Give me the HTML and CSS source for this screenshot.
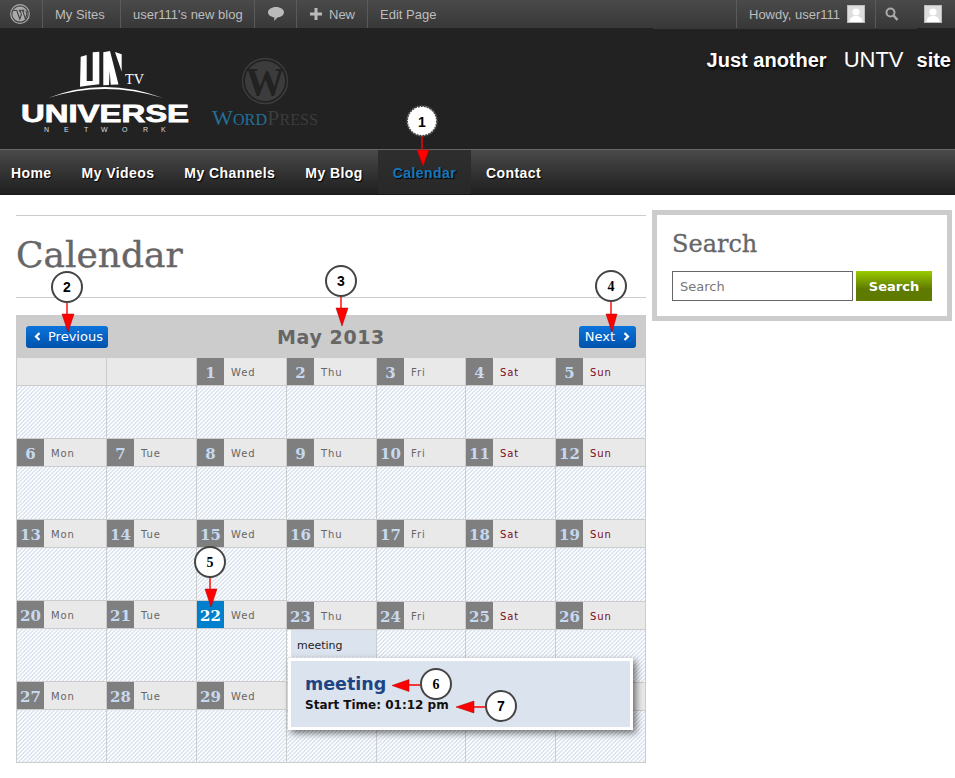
FILE: index.html
```html
<!DOCTYPE html>
<html lang="en">
<head>
<meta charset="utf-8">
<title>Calendar</title>
<link rel="stylesheet" href="styles.css">
</head>
<body>
<div class="adminbar">
  <div class="ab-item ab-logo"><svg width="20" height="20" viewBox="0 0 20 20"><circle cx="10" cy="10" r="9.3" fill="none" stroke="#aaa" stroke-width="1.2"/><circle cx="10" cy="10" r="7.6" fill="#aaa"/><path d="M3.5 6.5h3.3l3 8.5 1.6-4.6-1-3.2h-.9V6.200h4.200v.9h-.9l2.600 7.800 1.300-4.200c.5-1.700-.3-2.800-1-3.500" fill="none" stroke="#444" stroke-width="1.100"/></svg></div>
  <div class="ab-item ab-sites">My Sites</div>
  <div class="ab-item ab-blog">user111's new blog</div>
  <div class="ab-item ab-comment"><svg width="16" height="14" viewBox="0 0 16 14"><path d="M8 0c4.400 0 8 2.300 8 5.300s-3.600 5.200-6.500 5.200L6 14l.5-3.600C3 10.100 0 8.200 0 5.300 0 2.300 3.600 0 8 0z" fill="#bbb"/></svg></div>
  <div class="ab-item ab-new"><svg width="12" height="12" viewBox="0 0 12 12"><path d="M4.500 0h3v4.500H12v3H7.500V12h-3V7.500H0v-3h4.500z" fill="#bbb"/></svg>New</div>
  <div class="ab-item ab-plain">Edit Page</div>
  <div class="ab-right">
    <div class="ab-item ab-howdy">Howdy, user111<svg class="avatar" width="18" height="18" viewBox="0 0 18 18"><rect width="18" height="18" fill="#bbb"/><rect x="1" y="1" width="16" height="16" fill="#ddd"/><circle cx="9" cy="7" r="3.600" fill="#fff"/><path d="M2.500 17c.5-4.500 3-6 6.500-6s6 1.500 6.500 6z" fill="#fff"/></svg></div>
    <div class="ab-item ab-search"><svg width="14" height="14" viewBox="0 0 14 14"><circle cx="5.500" cy="5.500" r="4" fill="none" stroke="#aaa" stroke-width="2"/><path d="M8.500 8.500l4 4.500" stroke="#aaa" stroke-width="2.600"/></svg></div>
    <div class="ab-profile"><svg width="18" height="18" viewBox="0 0 18 18"><rect width="18" height="18" fill="#bbb"/><rect x="1" y="1" width="16" height="16" fill="#ddd"/><circle cx="9" cy="7" r="3.600" fill="#fff"/><path d="M2.500 17c.5-4.500 3-6 6.500-6s6 1.500 6.500 6z" fill="#fff"/></svg></div>
  </div>
</div>

<header class="masthead">
  <svg class="logos" width="340" height="121" viewBox="0 28 340 121">
    <g fill="#fff">
      <path d="M80.700 56.700l6-1.700v26h6V52.300l6.600-.6v32.600l-12.600 1.400-6.700 1z"/>
      <path d="M103.300 52.300l6.700-1.300 8.500 33.500-7.800.2-1-14-.7 14.300-5.700.2z"/>
      <path d="M115 52l6.700 2.300v17.400z"/>
      <path d="M48 98Q104 76 163 98 104 80 48 98z"/>
      <text class="logo-tv" x="125" y="84" textLength="19" lengthAdjust="spacingAndGlyphs">TV</text>
      <text class="logo-universe" x="21" y="122" textLength="168" lengthAdjust="spacingAndGlyphs">UNIVERSE</text>
      <text class="logo-network" x="44 64 84 101 122 143 161" y="132">NETWORK</text>
    </g>
    <circle cx="265" cy="81" r="22.500" fill="none" stroke="#3c3c3c" stroke-width="1.500"/>
    <circle cx="265" cy="81" r="20" fill="#3c3c3c"/>
    <text class="logo-w" x="265" y="95" text-anchor="middle">W</text>
    <text class="logo-wp" x="212" y="125" textLength="106" lengthAdjust="spacingAndGlyphs"><tspan class="wp-blue">W<tspan class="wp-small">ORD</tspan></tspan><tspan class="wp-dark">P<tspan class="wp-small">RESS</tspan></tspan></text>
  </svg>
  <p class="tagline"><b>Just another</b><span class="tag-name">UNTV</span><b>site</b></p>
</header>

<nav class="mainnav">
  <a class="nav-item">Home</a>
  <a class="nav-item">My Videos</a>
  <a class="nav-item">My Channels</a>
  <a class="nav-item">My Blog</a>
  <a class="nav-item nav-active">Calendar</a>
  <a class="nav-item">Contact</a>
</nav>

<main class="page">
  <section class="content">
    <h1 class="page-title">Calendar</h1>
    <div class="calendar">
      <div class="cal-head">
        <a class="cal-btn cal-prev"><svg width="7" height="9" viewBox="0 0 7 9"><path d="M5.500 1L2 4.500 5.500 8" fill="none" stroke="#fff" stroke-width="2.200"/></svg>Previous</a>
        <h2 class="cal-title">May 2013</h2>
        <a class="cal-btn cal-next">Next<svg width="7" height="9" viewBox="0 0 7 9"><path d="M1.500 1L5 4.500 1.500 8" fill="none" stroke="#fff" stroke-width="2.200"/></svg></a>
      </div>
      <div class="cal-grid">
        <div class="cell"><div class="cell-head"></div><div class="cell-body"></div></div>
        <div class="cell"><div class="cell-head"></div><div class="cell-body"></div></div>
        <div class="cell"><div class="cell-head"><span class="num">1</span><span class="day">Wed</span></div><div class="cell-body"></div></div>
        <div class="cell"><div class="cell-head"><span class="num">2</span><span class="day">Thu</span></div><div class="cell-body"></div></div>
        <div class="cell"><div class="cell-head"><span class="num">3</span><span class="day">Fri</span></div><div class="cell-body"></div></div>
        <div class="cell"><div class="cell-head"><span class="num">4</span><span class="day weekend">Sat</span></div><div class="cell-body"></div></div>
        <div class="cell"><div class="cell-head"><span class="num">5</span><span class="day weekend">Sun</span></div><div class="cell-body"></div></div>

        <div class="cell"><div class="cell-head"><span class="num">6</span><span class="day">Mon</span></div><div class="cell-body"></div></div>
        <div class="cell"><div class="cell-head"><span class="num">7</span><span class="day">Tue</span></div><div class="cell-body"></div></div>
        <div class="cell"><div class="cell-head"><span class="num">8</span><span class="day">Wed</span></div><div class="cell-body"></div></div>
        <div class="cell"><div class="cell-head"><span class="num">9</span><span class="day">Thu</span></div><div class="cell-body"></div></div>
        <div class="cell"><div class="cell-head"><span class="num">10</span><span class="day">Fri</span></div><div class="cell-body"></div></div>
        <div class="cell"><div class="cell-head"><span class="num">11</span><span class="day weekend">Sat</span></div><div class="cell-body"></div></div>
        <div class="cell"><div class="cell-head"><span class="num">12</span><span class="day weekend">Sun</span></div><div class="cell-body"></div></div>

        <div class="cell"><div class="cell-head"><span class="num">13</span><span class="day">Mon</span></div><div class="cell-body"></div></div>
        <div class="cell"><div class="cell-head"><span class="num">14</span><span class="day">Tue</span></div><div class="cell-body"></div></div>
        <div class="cell"><div class="cell-head"><span class="num">15</span><span class="day">Wed</span></div><div class="cell-body"></div></div>
        <div class="cell open"><div class="cell-head"><span class="num">16</span><span class="day">Thu</span></div><div class="cell-body"></div></div>
        <div class="cell open"><div class="cell-head"><span class="num">17</span><span class="day">Fri</span></div><div class="cell-body"></div></div>
        <div class="cell open"><div class="cell-head"><span class="num">18</span><span class="day weekend">Sat</span></div><div class="cell-body"></div></div>
        <div class="cell open"><div class="cell-head"><span class="num">19</span><span class="day weekend">Sun</span></div><div class="cell-body"></div></div>

        <div class="cell"><div class="cell-head"><span class="num">20</span><span class="day">Mon</span></div><div class="cell-body"></div></div>
        <div class="cell"><div class="cell-head"><span class="num">21</span><span class="day">Tue</span></div><div class="cell-body"></div></div>
        <div class="cell"><div class="cell-head"><span class="num today">22</span><span class="day">Wed</span></div><div class="cell-body"></div></div>
        <div class="cell open topped"><div class="cell-head"><span class="num">23</span><span class="day">Thu</span></div><div class="cell-body"><div class="event">meeting</div></div></div>
        <div class="cell open topped"><div class="cell-head"><span class="num">24</span><span class="day">Fri</span></div><div class="cell-body"></div></div>
        <div class="cell open topped"><div class="cell-head"><span class="num">25</span><span class="day weekend">Sat</span></div><div class="cell-body"></div></div>
        <div class="cell open topped"><div class="cell-head"><span class="num">26</span><span class="day weekend">Sun</span></div><div class="cell-body"></div></div>

        <div class="cell"><div class="cell-head"><span class="num">27</span><span class="day">Mon</span></div><div class="cell-body"></div></div>
        <div class="cell"><div class="cell-head"><span class="num">28</span><span class="day">Tue</span></div><div class="cell-body"></div></div>
        <div class="cell"><div class="cell-head"><span class="num">29</span><span class="day">Wed</span></div><div class="cell-body"></div></div>
        <div class="cell topped"><div class="cell-head"></div><div class="cell-body"></div></div>
        <div class="cell topped"><div class="cell-head"></div><div class="cell-body"></div></div>
        <div class="cell topped"><div class="cell-head"></div><div class="cell-body"></div></div>
        <div class="cell topped"><div class="cell-head"></div><div class="cell-body"></div></div>
      </div>
      <div class="popup">
        <div class="popup-title">meeting</div>
        <div class="popup-time">Start Time: 01:12 pm</div>
      </div>
    </div>
  </section>
  <aside class="sidebar">
    <h3 class="widget-title">Search</h3>
    <form class="search-form">
      <input class="search-input" type="text" placeholder="Search">
      <button class="search-btn" type="button">Search</button>
    </form>
  </aside>
</main>

<svg class="callouts" width="955" height="778" viewBox="0 0 955 778">
  <g class="leaders">
    <path d="M422 136v14M67 302v12M341 296v12M611 301v13M210 577v12M409 685h12M474 707h12"/>
  </g>
  <g class="heads">
    <path d="M417 150h12l-6 16zM62 314h12l-6 18zM336 308h12l-6 18zM606 314h11l-5 18zM205 589h12l-6 18zM392 685.500l17-6v12zM456 707l18-6v12z"/>
  </g>
  <circle class="bubble bubble-dotted" cx="422" cy="121" r="15"/>
  <circle class="bubble" cx="67" cy="287" r="15"/>
  <circle class="bubble" cx="341" cy="281" r="15"/>
  <circle class="bubble" cx="611" cy="286" r="15"/>
  <circle class="bubble" cx="210" cy="562" r="15"/>
  <circle class="bubble" cx="436" cy="684" r="15"/>
  <circle class="bubble" cx="501" cy="706" r="15"/>
  <text class="mark" x="422" y="127">1</text>
  <text class="mark" x="67" y="292">2</text>
  <text class="mark" x="341" y="286">3</text>
  <text class="mark mark-serif" x="611" y="291">4</text>
  <text class="mark mark-serif" x="210" y="567">5</text>
  <text class="mark mark-serif" x="436" y="689">6</text>
  <text class="mark" x="501" y="711">7</text>
</svg>
</body>
</html>
```

FILE: styles.css
```css
* { box-sizing: border-box; }
html, body { margin: 0; padding: 0; }
body {
  position: relative;
  background: #fff;
  color: #666;
  font-family: "Liberation Sans", Arial, sans-serif;
  overflow: hidden;
  height: 778px;
}

/* admin bar */
.adminbar {
  position: relative;
  display: flex;
  height: 28px;
  background: linear-gradient(#4a4a4a, #3f3f3f 60%, #383838);
  color: #bdbdbd;
  font-size: 13px;
}
.adminbar::after {
  content: "";
  position: absolute;
  left: 653px;
  top: 28px;
  width: 264px;
  height: 1px;
  background: #383838;
}
.ab-item {
  display: flex;
  flex: none;
  align-items: center;
  padding: 0 0 0 12px;
  border-right: 1px solid #5a5a5a;
  white-space: nowrap;
}
.ab-logo { width: 43px; padding-left: 10px; }
.ab-sites { width: 78px; }
.ab-blog { width: 134px; }
.ab-comment { width: 42px; padding-left: 13px; }
.ab-new { width: 71px; gap: 7px; padding-left: 13px; }
.ab-plain { border-right: 0; }
.ab-right { display: flex; margin-left: auto; width: 219px; }
.ab-howdy { width: 140px; gap: 7px; border-left: 1px solid #5a5a5a; }
.ab-search { width: 41px; padding-left: 9px; border-right: 0; }
.ab-profile { padding: 5px 0 0 7px; }
.avatar { flex: none; }

/* header */
.masthead {
  display: flex;
  justify-content: space-between;
  height: 121px;
  background: #222;
}
.logos { display: block; flex: none; }
.logo-tv { font: 14px "Liberation Serif", serif; }
.logo-universe { font: 900 24px "Liberation Sans", sans-serif; stroke: #fff; stroke-width: .8px; }
.logo-network { font: 7px "Liberation Sans", sans-serif; fill: #ddd; }
.logo-w { font: bold 39px "Liberation Serif", serif; fill: #222; }
.logo-wp { font: 22px "Liberation Serif", serif; }
.wp-small { font-size: 16px; }
.wp-blue { fill: #23709a; }
.wp-dark { fill: #3c3c3c; }
.tagline {
  margin: 19px 4px 0 0;
  color: #fff;
  font-size: 20px;
  line-height: 26px;
  white-space: nowrap;
  text-shadow: 1px 2px 3px #000;
}
.tag-name { font-size: 22px; margin: 0 13px 0 17px; text-shadow: none; }

/* nav */
.mainnav {
  display: flex;
  height: 46px;
  border-top: 1px solid #666;
  border-bottom: 1px solid #1a1a1a;
  background: linear-gradient(#4a4a4a, #3c3c3c 30%, #1f1f1f);
}
.nav-item {
  padding: 0 15px;
  color: #fff;
  font-size: 14px;
  font-weight: bold;
  letter-spacing: .42px;
  line-height: 46px;
  text-shadow: 1px 1px 1px #000;
}
.nav-item:first-child { padding-left: 11px; }
.nav-active {
  color: #1278be;
  background: linear-gradient(#2e2e2e, #282828);
}

/* page */
.page { display: flex; align-items: flex-start; gap: 6px; padding-left: 16px; }
.content { flex: none; width: 630px; padding-top: 20px; }
.page-title {
  margin: 0;
  height: 83px;
  border-top: 1px solid #ccc;
  border-bottom: 1px solid #ccc;
  color: #666;
  font: normal 36px/77px "DejaVu Serif", serif;
  -webkit-text-stroke: .4px #666;
}

/* calendar */
.calendar { position: relative; margin-top: 17px; }
.cal-head {
  display: grid;
  grid-template-columns: 1fr auto 1fr;
  align-items: center;
  height: 43px;
  padding: 0 10px;
  background: #ccc;
}
.cal-btn {
  display: flex;
  align-items: center;
  justify-self: start;
  gap: 7px;
  height: 22px;
  border-radius: 3px;
  background: linear-gradient(#0b74dc, #0052ab);
  color: #fff;
  font: 13px "DejaVu Sans", sans-serif;
}
.cal-prev { padding: 0 5px 0 8px; }
.cal-next { justify-self: end; gap: 8px; padding: 0 6px; }
.cal-title {
  margin: 0;
  color: #666;
  font: bold 19px "DejaVu Sans", sans-serif;
  letter-spacing: .6px;
}
.cal-grid {
  display: grid;
  grid-template-columns: 90px 90px 90px 90px 89px 90px 90px;
  grid-auto-rows: 81px;
  border-right: 1px solid #ccc;
}
.cell {
  display: flex;
  flex-direction: column;
  border-left: 1px solid #ccc;
  border-bottom: 1px solid #ccc;
}
.cell.open { border-bottom: 0; }
.cell.topped { border-top: 1px solid #ccc; }
.cell-head {
  display: flex;
  flex: none;
  align-items: center;
  height: 28px;
  border-bottom: 1px solid #ccc;
  background: #e9e9e9;
}
.cell-body {
  flex: 1;
  background: linear-gradient(135deg, #dde5f1 25%, #fbfcfe 25%, #fbfcfe 50%, #dde5f1 50%, #dde5f1 75%, #fbfcfe 75%) 0 0 / 4px 4px;
}
.num {
  flex: none;
  width: 27px;
  height: 27px;
  background: #7f7f7f;
  color: #c6d9f1;
  font: bold 15px/30px "DejaVu Serif", serif;
  text-align: center;
}
.num.today { background: #0080cc; color: #fff; }
.day {
  padding: 1px 0 0 7px;
  color: #666;
  font: 10px "DejaVu Sans", sans-serif;
  letter-spacing: .9px;
}
.day.weekend { color: #7a0c1e; }
.event {
  height: 27px;
  margin-left: 1px;
  padding-left: 6px;
  border-left: 3px solid #fff;
  background: #dbe3ee;
  color: #222;
  font: 11px/31px "DejaVu Sans", sans-serif;
}
.popup {
  position: absolute;
  left: 272px;
  top: 343px;
  width: 345px;
  height: 72px;
  padding: 11px 14px;
  border: 3px solid #fff;
  background: #dbe3ee;
  box-shadow: 3px 3px 7px rgba(0, 0, 0, .55);
}
.popup-title {
  color: #1d4585;
  font: bold 17.500px/24px "DejaVu Sans", sans-serif;
}
.popup-time {
  margin-top: 1px;
  color: #111;
  font: bold 12px/16px "DejaVu Sans", sans-serif;
}

/* sidebar */
.sidebar {
  flex: none;
  width: 300px;
  height: 111px;
  margin-top: 15px;
  padding: 14px 15px 0;
  border: 5px solid #ccc;
}
.widget-title {
  margin: 0;
  color: #666;
  font: normal 24px/30px "DejaVu Serif", serif;
  -webkit-text-stroke: .3px #666;
}
.search-form { display: flex; gap: 3px; margin-top: 12px; }
.search-input {
  width: 181px;
  height: 30px;
  margin: 0;
  padding: 0 7px;
  border: 1px solid #666;
  border-radius: 0;
  outline: 0;
  color: #666;
  font: 13px "DejaVu Sans", sans-serif;
}
.search-input::placeholder { color: #777; opacity: 1; }
.search-btn {
  width: 76px;
  height: 30px;
  padding: 0;
  border: 0;
  background: linear-gradient(#9c0, #5f7a00 60%);
  color: #fff;
  font: bold 13px "DejaVu Sans", sans-serif;
}

/* callouts */
.callouts { position: absolute; left: 0; top: 0; pointer-events: none; }
.leaders path { stroke: #f00; stroke-width: 1.400; fill: none; }
.heads path { fill: #f00; stroke: #a00; stroke-width: .5; }
.bubble { fill: #fff; stroke: #444; stroke-width: 2; }
.bubble-dotted { stroke-dasharray: 2 1; }
.mark {
  fill: #000;
  font: bold 14px "Liberation Sans", sans-serif;
  text-anchor: middle;
}
.mark-serif { font-family: "Liberation Serif", serif; }
```
